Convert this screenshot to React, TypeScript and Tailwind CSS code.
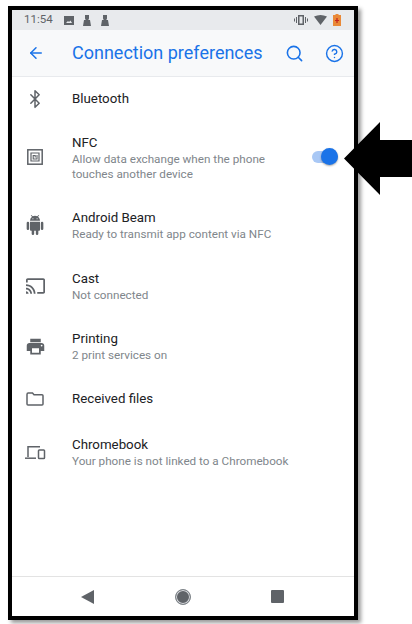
import React from 'react';
import { ArrowLeft, Search, CircleHelp, Bluetooth } from 'lucide-react';

const font = { fontFamily: 'Roboto, sans-serif' };

const NfcIcon = () => (
  <svg width="16" height="16" viewBox="0 0 16 16" fill="none" stroke="#5f6368">
    <rect x="0.8" y="0.8" width="14.400" height="14.400" strokeWidth="1.5" />
    <path d="M4 4h8v8H4z" strokeWidth="1.2" />
    <path d="M10 6v4H6.200V6.500H8.200V8.500" strokeWidth="1.100" />
  </svg>
);

const AndroidIcon = () => (
  <svg width="20" height="20" viewBox="0 0 24 24" fill="#5f6368">
    <path d="M6 18c0 .55.45 1 1 1h1v3.500a1.500 1.500 0 0 0 3 0V19h2v3.500a1.500 1.500 0 0 0 3 0V19h1c.55 0 1-.45 1-1V8H6v10zM3.500 8A1.500 1.500 0 0 0 2 9.500v7a1.500 1.500 0 0 0 3 0v-7A1.500 1.500 0 0 0 3.500 8zm17 0a1.500 1.500 0 0 0-1.500 1.500v7a1.500 1.500 0 0 0 3 0v-7A1.500 1.500 0 0 0 20.500 8zm-4.970-5.840 1.300-1.300a.5.500 0 0 0-.7-.7l-1.480 1.480A5.840 5.840 0 0 0 12 1c-.96 0-1.860.23-2.660.63L7.850.15a.5.500 0 0 0-.7.7l1.310 1.310A5.980 5.980 0 0 0 6 7h12c0-1.990-.97-3.750-2.470-4.840zM10 5H9V4h1v1zm5 0h-1V4h1v1z" />
  </svg>
);

const CastIcon = () => (
  <svg width="19" height="16" viewBox="0 0 22 18" fill="#5f6368">
    <path d="M20 0H2C.9 0 0 .9 0 2v3h2V2h18v14h-7v2h7c1.100 0 2-.9 2-2V2c0-1.100-.9-2-2-2zM0 15v3h3c0-1.660-1.340-3-3-3zm0-4v2c2.760 0 5 2.240 5 5h2c0-3.870-3.130-7-7-7zm0-4v2c4.970 0 9 4.030 9 9h2C11 11.920 6.070 7 0 7z" />
  </svg>
);

const PrintIcon = () => (
  <svg width="21" height="21" viewBox="0 0 24 24" fill="#5f6368">
    <path d="M19 8H5c-1.660 0-3 1.340-3 3v6h4v4h12v-4h4v-6c0-1.660-1.340-3-3-3zm-3 11H8v-5h8v5zm3-7c-.55 0-1-.45-1-1s.45-1 1-1 1 .45 1 1-.45 1-1 1zm-1-9H6v4h12V3z" />
  </svg>
);

const FolderIcon = () => (
  <svg width="18" height="14" viewBox="0 0 18 14" fill="none" stroke="#5f6368" strokeWidth="1.5">
    <path d="M1 2.500C1 1.500 1.500 1 2.200 1H6.500L8 2.700H16C16.600 2.700 17 3.200 17 3.800V12C17 12.600 16.600 13 16 13H2C1.400 13 1 12.600 1 12V2.500Z" />
  </svg>
);

const ChromebookIcon = () => (
  <svg width="21" height="15" viewBox="0 0 21 15" fill="none" stroke="#5f6368" strokeWidth="1.5">
    <path d="M3 12V1.800H15" />
    <path d="M0 13.200H11" />
    <rect x="13.500" y="5" width="6" height="8.500" rx="0.8" />
  </svg>
);

const rows = [
  { title: 'Bluetooth', h: 'h-[43px]', icon: <Bluetooth size={20} color="#5f6368" strokeWidth={1.8} /> },
  {
    title: 'NFC',
    sub: ['Allow data exchange when the phone', 'touches another device'],
    h: 'h-[74px]',
    icon: <NfcIcon />,
    toggle: true,
  },
  { title: 'Android Beam', sub: ['Ready to transmit app content via NFC'], h: 'h-[62px]', icon: <AndroidIcon /> },
  { title: 'Cast', sub: ['Not connected'], h: 'h-[60px]', icon: <CastIcon /> },
  { title: 'Printing', sub: ['2 print services on'], h: 'h-[60px]', icon: <PrintIcon /> },
  { title: 'Received files', h: 'h-[45px]', icon: <FolderIcon /> },
  { title: 'Chromebook', sub: ['Your phone is not linked to a Chromebook'], h: 'h-[62px]', icon: <ChromebookIcon /> },
];

export default function App() {
  return (
    <div className="relative w-[412px] h-[624px] bg-white overflow-hidden pt-[6px] pl-[8px]" style={font}>
      <div className="w-[350px] h-[614px] border-4 border-black bg-white flex flex-col shadow-[3px_3px_4px_rgba(0,0,0,0.4)]">
        {/* status bar */}
        <div className="h-[20px] bg-[#e8eaed] flex items-center pl-[12px] pr-[13px] shrink-0">
          <span className="text-[11.5px] text-[#5f6368] w-[40px]">11:54</span>
          <svg width="10" height="9" viewBox="0 0 10 9" fill="#5f6368">
            <path d="M0 0h10v9H0z" />
            <path d="M2 7l2-2 1 1 1.500-1.500L8 7z" fill="#e8eaed" />
          </svg>
          <svg className="ml-[9px]" width="8" height="11" viewBox="0 0 8 11" fill="#5f6368">
            <path d="M2 0h4v3.500L5.300 5H7l1 6H0l1-6h1.700L2 3.500z" />
          </svg>
          <svg className="ml-[10px]" width="8" height="11" viewBox="0 0 8 11" fill="#5f6368">
            <path d="M2 0h4v3.500L5.300 5H7l1 6H0l1-6h1.700L2 3.500z" />
          </svg>
          <div className="ml-auto flex items-center gap-[6px]">
            <svg width="14" height="10" viewBox="0 0 14 10" fill="#5f6368">
              <path d="M4 0h6v10H4zM5.500 1.500v7h3v-7zM2 2h1v6H2zM0 3.500h1v3H0zM11 2h1v6h-1zM13 3.500h1v3h-1z" fillRule="evenodd" />
            </svg>
            <svg width="13" height="10" viewBox="0 0 13 10" fill="#5f6368">
              <path d="M0 1.500Q6.500-1.500 13 1.500L6.500 10z" />
            </svg>
            <svg width="8" height="12" viewBox="0 0 8 12">
              <path d="M2.500 0h3v1H8v11H0V1h2.500z" fill="#e8710a" opacity="0.8" />
              <path d="M4 4v5M2 6.500h4" stroke="#c5221f" strokeWidth="1.200" />
            </svg>
          </div>
        </div>

        {/* app bar */}
        <div className="h-[47px] bg-[#f8f9fa] border-b border-[#e8eaed] flex items-center shrink-0">
          <div className="w-[60px] pl-[15px] shrink-0">
            <ArrowLeft size={18} color="#1a73e8" strokeWidth={2} />
          </div>
          <span className="text-[18px] text-[#1a73e8] leading-none">Connection preferences</span>
          <div className="ml-auto flex items-center pr-[10px] gap-[21px]">
            <Search size={19} color="#1a73e8" strokeWidth={2} />
            <CircleHelp size={19} color="#1a73e8" strokeWidth={1.8} />
          </div>
        </div>

        {/* rows */}
        <div className="flex-1">
          {rows.map((row) => (
            <div key={row.title} className={`flex items-center ${row.h}`}>
              <div className="w-[46px] flex justify-center shrink-0">{row.icon}</div>
              <div className="ml-[14px] flex-1">
                <div className="text-[13.3px] leading-[19px] text-[#202124]">{row.title}</div>
                {row.sub?.map((line) => (
                  <div key={line} className="text-[11.7px] leading-[15px] text-[#80868b]">
                    {line}
                  </div>
                ))}
              </div>
              {row.toggle && (
                <div className="relative w-[26px] h-[12px] mr-[16px] rounded-full bg-[#a9c8f5]">
                  <div className="absolute right-0 -top-[3px] w-[17px] h-[17px] rounded-full bg-[#1a73e8] shadow-[0_1px_2px_rgba(0,0,0,0.35)]" />
                </div>
              )}
            </div>
          ))}
        </div>

        {/* nav bar */}
        <div className="h-[40px] border-t border-[#e3e3e3] flex items-center pl-[69px] shrink-0">
          <svg width="13" height="14" viewBox="0 0 13 14" fill="#5f6368">
            <path d="M13 0v14L0 7z" />
          </svg>
          <div className="ml-[81px] w-[16px] h-[16px] rounded-full bg-[#5f6368] border border-[#80868b] shadow-[inset_0_0_0_1px_#dadce0]" />
          <div className="ml-[80px] w-[13px] h-[13px] rounded-[1px] bg-[#5f6368]" />
        </div>
      </div>

      {/* callout arrow */}
      <svg className="absolute left-[344px] top-[122px]" width="68" height="73" viewBox="0 0 68 73" fill="#000">
        <path d="M0 36.500L36 0v18h32v37H36v18z" />
      </svg>
    </div>
  );
}
